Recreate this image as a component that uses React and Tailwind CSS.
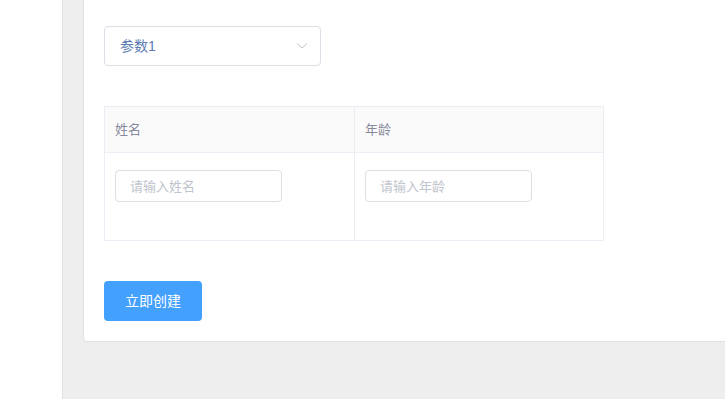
import React, { useState } from 'react';

const App = () => {
  const [param] = useState('参数1');

  return (
    <div className="flex h-[399px] w-[725px] overflow-hidden bg-white font-['Liberation_Sans','Noto_Sans_CJK_SC',sans-serif]">
      <div className="w-[63px] shrink-0 border-r border-[#e2e2e2] bg-white" />
      <div className="flex-1 bg-[#eeeeee] pl-[20px]">
        <div className="-mr-[10px] -mt-[10px] h-[352px] rounded-[4px] border border-[#e0e0e0] bg-white pl-[20px] pt-[35px]">
          <div className="flex h-[40px] w-[217px] items-center justify-between rounded-[4px] border border-[#dcdfe6] pl-[15px] pr-[12px] text-[14px] text-[#5b7bb1]">
            <span>{param}</span>
            <svg width="12" height="8" viewBox="0 0 12 8" fill="none">
              <path d="M1 1.5 L6 6 L11 1.5" stroke="#c0c4cc" strokeWidth="1" />
            </svg>
          </div>

          <div className="mt-[40px] w-[500px] border border-[#ebeef5]">
            <div className="flex h-[45px] bg-[#fafafa] text-[13px] text-[#8a8a9e]">
              <div className="flex w-[250px] items-center border-r border-[#ebeef5] pl-[10px]">姓名</div>
              <div className="flex flex-1 items-center pl-[10px]">年龄</div>
            </div>
            <div className="flex h-[88px] border-t border-[#ebeef5]">
              <div className="w-[250px] border-r border-[#ebeef5] pl-[10px] pt-[17px]">
                <input
                  placeholder="请输入姓名"
                  className="h-[32px] w-[167px] rounded-[4px] border border-[#dcdfe6] px-[14px] text-[13px] outline-none placeholder:text-[#c0c4cc]"
                />
              </div>
              <div className="flex-1 pl-[10px] pt-[17px]">
                <input
                  placeholder="请输入年龄"
                  className="h-[32px] w-[167px] rounded-[4px] border border-[#dcdfe6] px-[14px] text-[13px] outline-none placeholder:text-[#c0c4cc]"
                />
              </div>
            </div>
          </div>

          <button className="mt-[40px] h-[40px] w-[98px] rounded-[4px] bg-[#43a0fd] text-[14px] text-white">
            立即创建
          </button>
        </div>
      </div>
    </div>
  );
};

export default App;
